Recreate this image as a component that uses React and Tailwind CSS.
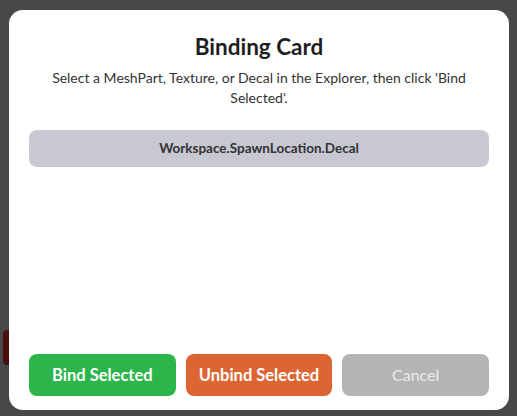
export default function App() {
  return (
    <div
      className="relative w-[517px] h-[416px] bg-[#484848] overflow-hidden"
      style={{ fontFamily: "Lato, 'Noto Sans', sans-serif" }}
    >
      <div className="absolute left-[3px] top-[330px] w-[12px] h-[35px] rounded-[4px] bg-[#4a0f0f]" />
      <div className="absolute left-[9px] top-[10px] w-[500px] h-[400px] bg-white rounded-[14px] flex flex-col px-[20px] pb-[14px]">
        <h1 className="mt-[22px] text-center text-[22.5px] leading-[30px] font-bold text-[#1e1e1e]">
          Binding Card
        </h1>
        <p className="mt-[6px] px-[12px] text-center text-[14px] leading-[20px] text-[#333]">
          Select a MeshPart, Texture, or Decal in the Explorer, then click 'Bind Selected'.
        </p>
        <div className="mt-[22px] h-[37px] rounded-[8px] bg-[#c8c8d2] flex items-center justify-center text-[13.5px] font-bold text-[#333]">
          Workspace.SpawnLocation.Decal
        </div>
        <div className="flex-1" />
        <div className="flex gap-[10px] h-[42px]">
          <button className="flex-1 rounded-[8px] bg-[#2bb54b] text-white font-bold text-[16.5px]">
            Bind Selected
          </button>
          <button className="flex-1 rounded-[8px] bg-[#dc6533] text-white font-bold text-[16.5px]">
            Unbind Selected
          </button>
          <button className="flex-1 rounded-[8px] bg-[#b4b4b4] text-[#ececec] text-[16px]">
            Cancel
          </button>
        </div>
      </div>
    </div>
  );
}
